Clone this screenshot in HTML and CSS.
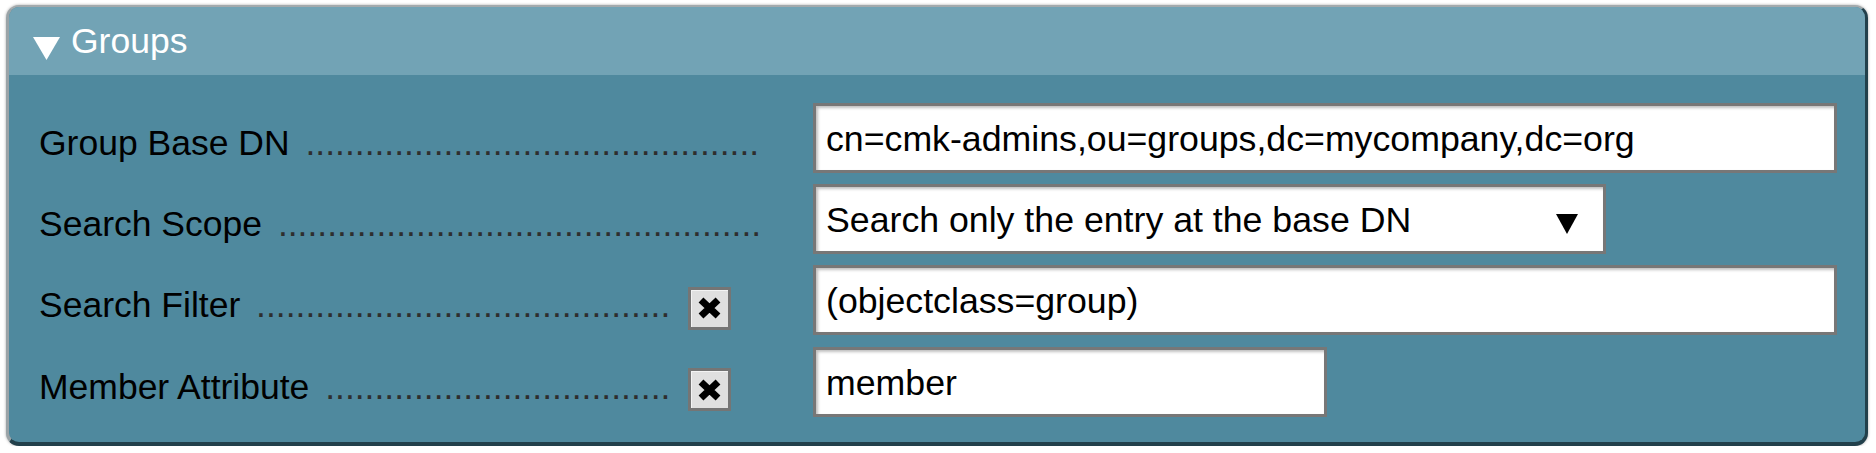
FILE: index.html
```html
<!DOCTYPE html>
<html>
<head>
<meta charset="utf-8">
<link rel="stylesheet" href="styles.css">
</head>
<body>
<div class="foldable">
  <div class="fold-head">
    <svg class="fold-tri" width="27" height="23" viewBox="0 0 27 23"><polygon points="0,0 27,0 13.5,23" fill="#fff"/></svg>
    <span class="fold-title">Groups</span>
  </div>
  <div class="fold-body">
    <div class="legend">
      <div class="legend-text"><span class="title">Group Base DN</span><span class="dots">........................................................................................................</span></div>
    </div>
    <div class="value"><div class="field wide">cn=cmk-admins,ou=groups,dc=mycompany,dc=org</div></div>

    <div class="legend">
      <div class="legend-text"><span class="title">Search Scope</span><span class="dots">........................................................................................................</span></div>
    </div>
    <div class="value"><div class="field select"><span>Search only the entry at the base DN</span><svg class="sel-arrow" width="22" height="20" viewBox="0 0 22 20"><polygon points="0,0 22,0 11,20" fill="#000"/></svg></div></div>

    <div class="legend">
      <div class="legend-text"><span class="title">Search Filter</span><span class="dots">........................................................................................................</span></div>
      <div class="checkbox"><svg width="25" height="24" viewBox="0 0 25 24"><path d="M4 4 L21 20 M21 4 L4 20" stroke="#000" stroke-width="7" fill="none"/></svg></div>
    </div>
    <div class="value"><div class="field wide">(objectclass=group)</div></div>

    <div class="legend">
      <div class="legend-text"><span class="title">Member Attribute</span><span class="dots">........................................................................................................</span></div>
      <div class="checkbox"><svg width="25" height="24" viewBox="0 0 25 24"><path d="M4 4 L21 20 M21 4 L4 20" stroke="#000" stroke-width="7" fill="none"/></svg></div>
    </div>
    <div class="value"><div class="field short">member</div></div>
  </div>
</div>
</body>
</html>
```

FILE: styles.css
```css
html, body {
  margin: 0;
  padding: 0;
  background: #ffffff;
}
body {
  font-family: "Liberation Sans", Arial, sans-serif;
}
.foldable {
  box-sizing: border-box;
  width: 1862px;
  margin: 5px 0 0 6px;
  border-style: solid;
  border-width: 2px 3px 4px 3px;
  border-color: #a3aaad #22404b #22404b #9aa3a7;
  border-radius: 13px;
  background: #4f899e;
  box-shadow: 0 0 3px rgba(0, 0, 0, 0.35);
  overflow: hidden;
}
.fold-head {
  height: 68px;
  box-sizing: border-box;
  background: #72a3b5;
  display: flex;
  align-items: flex-start;
  padding: 15px 0 0 24px;
}
.fold-tri {
  margin-top: 15px;
  margin-right: 11px;
  flex: none;
}
.fold-title {
  color: #ffffff;
  font-size: 35.5px;
  line-height: 39px;
}
.fold-body {
  display: grid;
  grid-template-columns: 721px 1fr;
  column-gap: 53px;
  row-gap: 11.3px;
  padding: 27.7px 28px 25px 30px;
}
.legend {
  display: flex;
  align-items: flex-start;
  height: 70px;
}
.legend-text {
  flex: 1;
  min-width: 0;
  overflow: hidden;
  white-space: nowrap;
  padding-top: 20px;
  font-size: 35.5px;
  line-height: 40px;
  color: #000;
}
.dots {
  color: #2e2e2e;
  margin-left: 6px;
  padding-left: 0.278em;
}
.checkbox {
  flex: none;
  box-sizing: border-box;
  width: 43px;
  height: 43px;
  margin: 21.5px 29px 0 20px;
  border: 3px solid #757575;
  background: #e0e0e0;
  box-shadow: inset 1px 1px 0 #f4f4f4;
  display: flex;
  align-items: center;
  justify-content: center;
}
.value {
  display: flex;
  align-items: flex-start;
}
.field {
  box-sizing: border-box;
  height: 70px;
  border: 3px solid #777777;
  background: #ffffff;
  box-shadow: inset 2px 2px 3px rgba(0, 0, 0, 0.25);
  font-size: 35.7px;
  line-height: 40px;
  color: #000;
  padding: 13px 10px 0 10px;
  white-space: nowrap;
  overflow: hidden;
}
.wide {
  width: 100%;
}
.select {
  width: 793px;
  display: flex;
  align-items: flex-start;
  justify-content: space-between;
  padding-right: 25px;
}
.sel-arrow {
  margin-top: 14px;
  flex: none;
}
.short {
  width: 514px;
}
```
